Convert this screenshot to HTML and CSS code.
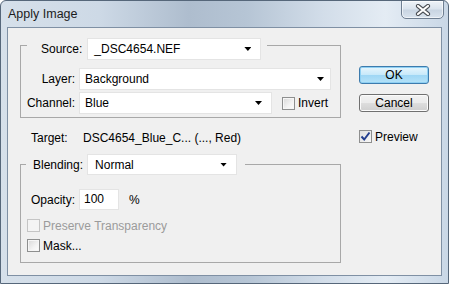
FILE: index.html
```html
<!DOCTYPE html>
<html lang="en">

<head>
    <meta charset="UTF-8">
    <meta name="viewport" content="width=device-width, initial-scale=1.0">
    <title>Apply Image</title>
    <link rel="stylesheet" href="styles.css">
</head>

<body>
    <div class="window">
        <!-- Barra de título -->
        <div class="titlebar">
            <span class="title">Apply Image</span>
            <button class="close-btn">
                <svg width="16" height="12" viewBox="0 0 16 12">
                    <path d="M3 2 L13 10 M13 2 L3 10" stroke="#4b4f55" stroke-width="4.2" stroke-linecap="round" fill="none" />
                    <path d="M3 2 L13 10 M13 2 L3 10" stroke="#ffffff" stroke-width="2.2" stroke-linecap="round" fill="none" />
                </svg>
            </button>
        </div>

        <div class="client">
            <div class="main">
                <!-- Origem -->
                <div class="group group-source">
                    <div class="legend legend-source">
                        <span class="legend-label">Source:</span>
                        <div class="select select-source"><span>_DSC4654.NEF</span><i class="arrow"></i></div>
                    </div>
                    <div class="row row-layer">
                        <span class="lbl">Layer:</span>
                        <div class="select select-layer"><span>Background</span><i class="arrow"></i></div>
                    </div>
                    <div class="row row-channel">
                        <span class="lbl">Channel:</span>
                        <div class="select select-channel"><span>Blue</span><i class="arrow"></i></div>
                        <span class="check check-invert"></span>
                        <span class="check-text">Invert</span>
                    </div>
                </div>

                <div class="target">
                    <span class="target-label">Target:</span>
                    <span>DSC4654_Blue_C... (..., Red)</span>
                </div>

                <!-- Mistura -->
                <div class="group group-blend">
                    <div class="legend legend-blend">
                        <span class="legend-label">Blending:</span>
                        <div class="select select-blend"><span>Normal</span><i class="arrow"></i></div>
                    </div>
                    <div class="row row-opacity">
                        <span class="lbl">Opacity:</span>
                        <div class="input">100</div>
                        <span class="percent">%</span>
                    </div>
                    <div class="check-row check-row-first disabled">
                        <span class="check"></span>
                        <span class="check-text">Preserve Transparency</span>
                    </div>
                    <div class="check-row">
                        <span class="check"></span>
                        <span class="check-text">Mask...</span>
                    </div>
                </div>
            </div>

            <div class="side">
                <button class="btn btn-ok">OK</button>
                <button class="btn btn-cancel">Cancel</button>
                <div class="check-row check-preview">
                    <span class="check checked">
                        <svg width="11" height="11" viewBox="0 0 11 11">
                            <path d="M1.5 5.5 L4.2 8.5 L9.5 1.5" stroke="#243f8f" stroke-width="2" fill="none" />
                        </svg>
                    </span>
                    <span class="check-text">Preview</span>
                </div>
            </div>
        </div>
    </div>
</body>

</html>
```

FILE: styles.css
```css
* {
    box-sizing: border-box;
}

body {
    margin: 0;
    padding: 0;
    font-family: "Liberation Sans", Arial, sans-serif;
    font-size: 12px;
    color: #000;
    background-color: #ffffff;
}

.window {
    width: 449px;
    height: 284px;
    border: 1px solid #56677a;
    border-radius: 6px 6px 0 0;
    background: linear-gradient(90deg, #d6e0ea 0%, #cdd9e6 22%, #aebdce 42%, #b6c5d5 55%, #d2dde9 72%, #e4ecf4 86%, #c9d7e6 100%);
    display: flex;
    flex-direction: column;
    overflow: hidden;
}

.titlebar {
    height: 26px;
    display: flex;
    justify-content: space-between;
    align-items: flex-start;
    padding-left: 7px;
}

.title {
    font-size: 12.5px;
    color: #1c1c1c;
    line-height: 26px;
}

.close-btn {
    width: 43px;
    height: 19px;
    margin-top: -1px;
    margin-right: 4px;
    padding: 0;
    border: 1px solid #6f7f92;
    border-radius: 0 0 5px 5px;
    background: linear-gradient(180deg, #eef3f8 0%, #dbe4ee 45%, #c9d5e2 55%, #d9e3ee 100%);
    box-shadow: inset 0 0 0 1px rgba(255, 255, 255, 0.6);
    display: flex;
    justify-content: center;
    align-items: center;
}

.client {
    height: 249px;
    margin: 0 6px;
    border: 1px solid #7f90a4;
    background-color: #f0f0f0;
    display: flex;
    padding: 17px 0 0 12px;
}

.main {
    width: 321px;
}

.group {
    border: 1px solid #a8a8a8;
}

.legend {
    display: flex;
    align-items: center;
    width: fit-content;
    background-color: #f0f0f0;
}

.legend-source {
    margin: -8px 0 0 6px;
    padding: 0 6px 0 14px;
    gap: 5px;
}

.legend-blend {
    margin: -11px 0 0 5px;
    padding: 0 8px 0 7px;
    gap: 4px;
}

.select {
    height: 22px;
    background-color: #ffffff;
    border: 1px solid #e4e4e4;
    display: flex;
    align-items: center;
    justify-content: space-between;
    padding: 0 6px 0 5px;
}

.arrow {
    width: 7px;
    height: 4px;
    background-color: #000;
    clip-path: polygon(0 0, 100% 0, 50% 100%);
}

.select-source {
    width: 174px;
    padding-left: 6px;
    padding-right: 9px;
}

.select-layer {
    width: 252px;
}

.select-channel {
    width: 193px;
    padding-right: 9px;
}

.select-blend {
    width: 150px;
    height: 21px;
    padding-left: 7px;
    padding-right: 9px;
}

.row {
    display: flex;
    align-items: center;
    padding-left: 5px;
}

.lbl {
    width: 49px;
    text-align: right;
    margin-right: 4px;
}

.row-layer {
    margin-top: 8px;
}

.row-channel {
    margin-top: 2px;
    margin-bottom: 3px;
}

.check {
    width: 13px;
    height: 13px;
    border: 1px solid #8e8f8f;
    background: linear-gradient(135deg, #d8d8d8 0%, #f3f3f3 60%, #fdfdfd 100%);
    box-shadow: inset 0 0 0 1px #f6f6f6;
    display: flex;
    align-items: center;
    justify-content: center;
}

.check.checked {
    background: linear-gradient(135deg, #e0e0e0 0%, #f7f7f7 100%);
    box-shadow: none;
}

.check-invert {
    margin-left: 10px;
}

.check-text {
    margin-left: 3px;
}

.target {
    margin-top: 13px;
    padding-left: 11px;
    display: flex;
    line-height: 14px;
}

.target-label {
    width: 52px;
}

.group-blend {
    margin-top: 19px;
    padding-bottom: 10px;
}

.row-opacity {
    margin-top: 14px;
}

.input {
    width: 40px;
    height: 21px;
    background-color: #ffffff;
    border: 1px solid #e4e4e4;
    padding-left: 4px;
    line-height: 19px;
}

.percent {
    margin-left: 10px;
}

.check-row {
    display: flex;
    align-items: center;
    height: 13px;
    padding-left: 6px;
    margin-top: 7px;
}

.check-row-first {
    margin-top: 9px;
}

.disabled .check {
    border-color: #c5c5c5;
    background: #f4f4f4;
    box-shadow: none;
}

.disabled .check-text {
    color: #9b9b9b;
}

.side {
    margin-left: 18px;
    width: 70px;
    display: flex;
    flex-direction: column;
    padding-top: 21px;
}

.btn {
    width: 70px;
    height: 18px;
    padding: 0;
    font-family: "Liberation Sans", Arial, sans-serif;
    font-size: 12px;
    color: #000;
    border-radius: 3px;
    line-height: 14px;
}

.btn-ok {
    border: 1px solid #3d7bad;
    background: linear-gradient(180deg, #e8f6fd 0%, #c8e9fa 48%, #9fd7f5 52%, #b5e2f8 100%);
    box-shadow: inset 0 0 0 1px #8fd0f3;
}

.btn-cancel {
    margin-top: 10px;
    border: 1px solid #707070;
    background: linear-gradient(180deg, #f2f2f2 0%, #ebebeb 48%, #dddddd 52%, #cfcfcf 100%);
    box-shadow: inset 0 0 0 1px #fbfbfb;
}

.check-preview {
    padding-left: 0;
    margin-top: 18px;
}
```
